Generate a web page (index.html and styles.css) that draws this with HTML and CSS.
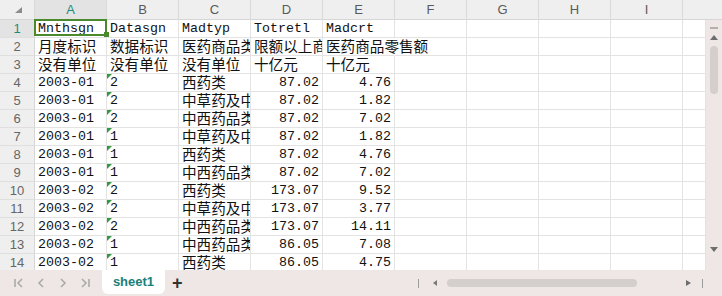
FILE: index.html
```html
<!DOCTYPE html>
<html lang="en">
<head>
    <meta charset="UTF-8">
    <meta name="viewport" content="width=device-width, initial-scale=1.0">
    <title>sheet1</title>
    <link rel="stylesheet" href="styles.css">
</head>
<body>
    <div class="book">
        <div class="sheet">
            <div class="corner">
                <svg width="7" height="6" viewBox="0 0 7 6"><polygon points="7,0 7,6 0,6" fill="#8c8c8c"/></svg>
            </div>
            <div class="col-head active">A</div>
            <div class="col-head">B</div>
            <div class="col-head">C</div>
            <div class="col-head">D</div>
            <div class="col-head">E</div>
            <div class="col-head">F</div>
            <div class="col-head">G</div>
            <div class="col-head">H</div>
            <div class="col-head">I</div>
            <div class="col-head rest"></div>

            <!-- vertical scrollbar -->
            <div class="vscroll">
                <span class="bar-min"></span>
                <span class="arrow up"></span>
                <span class="thumb"></span>
                <span class="arrow down"></span>
            </div>

            <div class="row-head active">1</div>
            <div class="c sel">Mnthsgn</div>
            <div class="c">Datasgn</div>
            <div class="c">Madtyp</div>
            <div class="c">Totretl</div>
            <div class="c">Madcrt</div>
            <div class="c"></div><div class="c"></div><div class="c"></div><div class="c"></div><div class="c"></div>

            <div class="row-head">2</div>
            <div class="c zh">月度标识</div>
            <div class="c zh">数据标识</div>
            <div class="c zh">医药商品类型</div>
            <div class="c zh">限额以上商品零售总额</div>
            <div class="c zh spill">医药商品零售额</div>
            <div class="c"></div><div class="c"></div><div class="c"></div><div class="c"></div><div class="c"></div>

            <div class="row-head">3</div>
            <div class="c zh">没有单位</div>
            <div class="c zh">没有单位</div>
            <div class="c zh">没有单位</div>
            <div class="c zh">十亿元</div>
            <div class="c zh">十亿元</div>
            <div class="c"></div><div class="c"></div><div class="c"></div><div class="c"></div><div class="c"></div>

            <div class="row-head">4</div>
            <div class="c">2003-01</div>
            <div class="c flag">2</div>
            <div class="c zh">西药类</div>
            <div class="c num">87.02</div>
            <div class="c num">4.76</div>
            <div class="c"></div><div class="c"></div><div class="c"></div><div class="c"></div><div class="c"></div>

            <div class="row-head">5</div>
            <div class="c">2003-01</div>
            <div class="c flag">2</div>
            <div class="c zh">中草药及中成药</div>
            <div class="c num">87.02</div>
            <div class="c num">1.82</div>
            <div class="c"></div><div class="c"></div><div class="c"></div><div class="c"></div><div class="c"></div>

            <div class="row-head">6</div>
            <div class="c">2003-01</div>
            <div class="c flag">2</div>
            <div class="c zh">中西药品类</div>
            <div class="c num">87.02</div>
            <div class="c num">7.02</div>
            <div class="c"></div><div class="c"></div><div class="c"></div><div class="c"></div><div class="c"></div>

            <div class="row-head">7</div>
            <div class="c">2003-01</div>
            <div class="c flag">1</div>
            <div class="c zh">中草药及中成药</div>
            <div class="c num">87.02</div>
            <div class="c num">1.82</div>
            <div class="c"></div><div class="c"></div><div class="c"></div><div class="c"></div><div class="c"></div>

            <div class="row-head">8</div>
            <div class="c">2003-01</div>
            <div class="c flag">1</div>
            <div class="c zh">西药类</div>
            <div class="c num">87.02</div>
            <div class="c num">4.76</div>
            <div class="c"></div><div class="c"></div><div class="c"></div><div class="c"></div><div class="c"></div>

            <div class="row-head">9</div>
            <div class="c">2003-01</div>
            <div class="c flag">1</div>
            <div class="c zh">中西药品类</div>
            <div class="c num">87.02</div>
            <div class="c num">7.02</div>
            <div class="c"></div><div class="c"></div><div class="c"></div><div class="c"></div><div class="c"></div>

            <div class="row-head">10</div>
            <div class="c">2003-02</div>
            <div class="c flag">2</div>
            <div class="c zh">西药类</div>
            <div class="c num">173.07</div>
            <div class="c num">9.52</div>
            <div class="c"></div><div class="c"></div><div class="c"></div><div class="c"></div><div class="c"></div>

            <div class="row-head">11</div>
            <div class="c">2003-02</div>
            <div class="c flag">2</div>
            <div class="c zh">中草药及中成药</div>
            <div class="c num">173.07</div>
            <div class="c num">3.77</div>
            <div class="c"></div><div class="c"></div><div class="c"></div><div class="c"></div><div class="c"></div>

            <div class="row-head">12</div>
            <div class="c">2003-02</div>
            <div class="c flag">2</div>
            <div class="c zh">中西药品类</div>
            <div class="c num">173.07</div>
            <div class="c num">14.11</div>
            <div class="c"></div><div class="c"></div><div class="c"></div><div class="c"></div><div class="c"></div>

            <div class="row-head">13</div>
            <div class="c">2003-02</div>
            <div class="c flag">1</div>
            <div class="c zh">中西药品类</div>
            <div class="c num">86.05</div>
            <div class="c num">7.08</div>
            <div class="c"></div><div class="c"></div><div class="c"></div><div class="c"></div><div class="c"></div>

            <div class="row-head">14</div>
            <div class="c">2003-02</div>
            <div class="c flag">1</div>
            <div class="c zh">西药类</div>
            <div class="c num">86.05</div>
            <div class="c num">4.75</div>
            <div class="c"></div><div class="c"></div><div class="c"></div><div class="c"></div><div class="c"></div>
        </div>

        <div class="tabs">
            <div class="nav">
                <svg width="10" height="10" viewBox="0 0 10 10"><path d="M1 1v8M8 1L4 5l4 4" fill="none" stroke="#ababab" stroke-width="1.6"/></svg>
                <svg width="10" height="10" viewBox="0 0 10 10"><path d="M7 1L3 5l4 4" fill="none" stroke="#ababab" stroke-width="1.6"/></svg>
                <svg width="10" height="10" viewBox="0 0 10 10"><path d="M3 1l4 4-4 4" fill="none" stroke="#ababab" stroke-width="1.6"/></svg>
                <svg width="10" height="10" viewBox="0 0 10 10"><path d="M2 1l4 4-4 4M9 1v8" fill="none" stroke="#ababab" stroke-width="1.6"/></svg>
            </div>
            <div class="tab">sheet1</div>
            <div class="add">+</div>
            <div class="hscroll">
                <span class="tick"></span>
                <span class="arrow left"></span>
                <span class="hthumb"></span>
                <span class="arrow right"></span>
                <span class="tick"></span>
            </div>
        </div>
    </div>
</body>
</html>
```

FILE: styles.css
```css
* {
    margin: 0;
    padding: 0;
    box-sizing: border-box;
}

body {
    width: 722px;
    height: 296px;
    overflow: hidden;
    background: #fff;
    font-family: "Liberation Sans", Arial, sans-serif;
}

.book {
    display: flex;
    flex-direction: column;
    height: 296px;
}

.sheet {
    display: grid;
    grid-template-columns: 35px repeat(9, 72px) 23px 16px;
    grid-template-rows: 20px repeat(14, 18px);
    height: 270px;
    overflow: hidden;
    background: #fff;
}

.corner {
    display: flex;
    align-items: flex-end;
    padding: 0 0 6px 15px;
    background: #efefef;
    border-right: 1px solid #dadada;
    border-bottom: 1px solid #d6d6d6;
}

.col-head {
    display: flex;
    justify-content: center;
    align-items: center;
    background: #efefef;
    border-right: 1px solid #dadada;
    border-bottom: 1px solid #d6d6d6;
    font-size: 13px;
    color: #5a5a5a;
}

.col-head.rest {
    grid-column: span 2;
    border-right: none;
}

.row-head {
    display: flex;
    justify-content: center;
    align-items: center;
    background: #efefef;
    border-right: 1px solid #d6d6d6;
    border-bottom: 1px solid #dfdfdf;
    font-size: 13px;
    color: #666;
}

.col-head.active,
.row-head.active {
    background: #e3e3e3;
    color: #1f8b7f;
}

.c {
    position: relative;
    padding: 0 3px;
    border-right: 1px solid #e3e3e3;
    border-bottom: 1px solid #e3e3e3;
    white-space: nowrap;
    overflow: hidden;
    font-family: "Liberation Mono", "Noto Sans CJK SC", monospace;
    font-size: 13.3px;
    line-height: 18px;
    color: #111;
}

.c.zh {
    font-family: "Noto Sans CJK SC", sans-serif;
    font-size: 14.6px;
    line-height: 16px;
}

.c.num {
    text-align: right;
}

.c.spill {
    overflow: visible;
    border-right-color: transparent;
    z-index: 1;
}

.c.flag::before {
    content: "";
    position: absolute;
    top: 0;
    left: 0;
    border-top: 5px solid #2f9a3f;
    border-right: 5px solid transparent;
}

.c.sel {
    overflow: visible;
    z-index: 2;
}

.c.sel::before {
    content: "";
    position: absolute;
    top: -1px;
    left: -1px;
    right: -1px;
    bottom: 1px;
    border: 2px solid #4a8a2c;
}

.c.sel::after {
    content: "";
    position: absolute;
    right: -3px;
    bottom: 0;
    width: 5px;
    height: 5px;
    background: #4a8a2c;
}

.vscroll {
    grid-column: 12;
    grid-row: 2 / 16;
    display: flex;
    flex-direction: column;
    align-items: center;
    background: #eee7e5;
    padding-top: 7px;
}

.bar-min {
    width: 8px;
    height: 2px;
    background: #b3adab;
}

.arrow {
    width: 0;
    height: 0;
    border: 4px solid transparent;
}

.arrow.up {
    margin-top: 6px;
    border-top: none;
    border-bottom: 5px solid #6e6e6e;
}

.arrow.down {
    margin-top: 153px;
    border-bottom: none;
    border-top: 5px solid #6e6e6e;
}

.thumb {
    width: 8px;
    height: 48px;
    margin-top: 6px;
    border-radius: 4px;
    background: #d4cecc;
}

.tabs {
    display: flex;
    align-items: flex-start;
    height: 26px;
    background: #eee7e5;
}

.nav {
    display: flex;
    align-items: center;
    gap: 12px;
    height: 26px;
    padding-left: 14px;
    width: 102px;
}

.tab {
    width: 63px;
    height: 24px;
    background: #fff;
    border-radius: 0 0 6px 6px;
    text-align: center;
    line-height: 24px;
    font-size: 13px;
    font-weight: bold;
    color: #1b8078;
}

.add {
    margin-left: 7px;
    line-height: 26px;
    font-size: 18px;
    font-weight: bold;
    color: #333;
}

.hscroll {
    display: flex;
    align-items: center;
    height: 26px;
    margin-left: auto;
    padding-right: 19px;
}

.tick {
    width: 1px;
    height: 9px;
    background: #9c9c9c;
}

.arrow.left {
    margin-left: 14px;
    border-left: none;
    border-right: 4px solid #7a7a7a;
    border-width: 3px 4px 3px 0;
}

.arrow.right {
    margin-left: 49px;
    border-right: none;
    border-left: 4px solid #6e6e6e;
    border-width: 3px 0 3px 5px;
}

.hthumb {
    width: 190px;
    height: 8px;
    margin-left: 10px;
    border-radius: 4px;
    background: #d4cecc;
}

.tick:last-child {
    margin-left: 11px;
}
```
